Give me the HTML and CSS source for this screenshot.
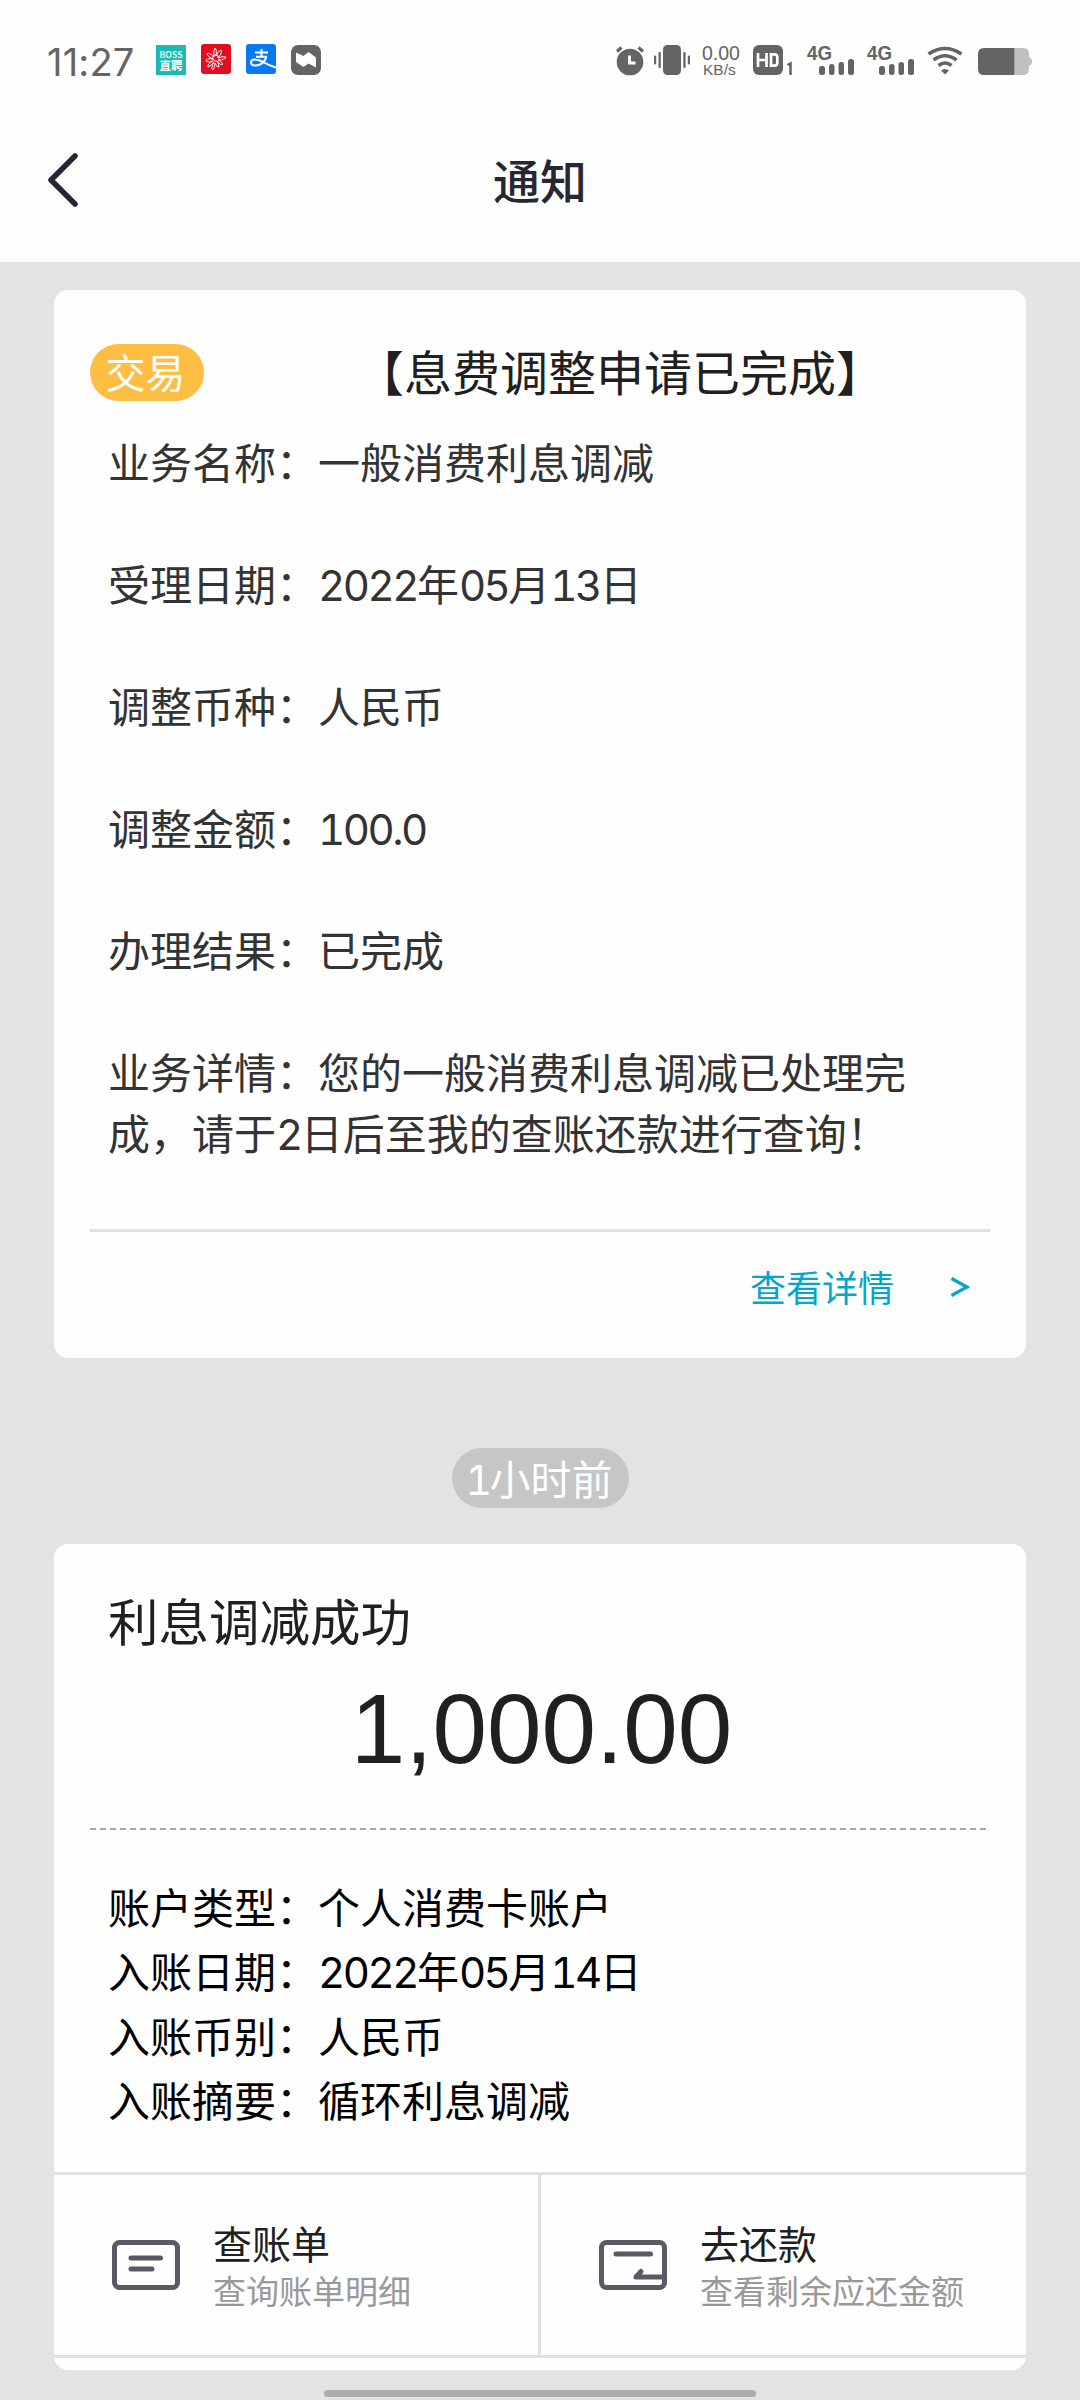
FILE: index.html
```html
<!DOCTYPE html>
<html lang="zh-CN">
<head>
<meta charset="utf-8">
<title>通知</title>
<link rel="stylesheet" href="styles.css">
</head>
<body>
<div class="statusbar">
  <div class="status-left">
    <span class="time">11:27</span>
    <svg class="app boss" width="30" height="30" viewBox="0 0 30 30"><rect width="30" height="30" fill="#1cbab4"/><text x="15" y="12.500" font-size="9.500" font-weight="500" textLength="23" lengthAdjust="spacingAndGlyphs" text-anchor="middle">BOSS</text><text x="15" y="25.200" font-size="11.500" font-weight="700" textLength="23" text-anchor="middle">直聘</text></svg>
    <svg class="app huawei" width="30" height="30" viewBox="0 0 30 30"><rect width="30" height="30" rx="3" fill="#e30d22"/><g fill="none" stroke="#fff" stroke-width="1" stroke-linejoin="round"><path d="M13 13Q8 8 6 10Q7 13 12 15Q5 14 5 17Q8 19 12 17Q6 20 7 23Q10 22 13 18Q9 24 12 26Q14 23 14 19Q16 24 18 23Q18 20 16 17Q20 22 22 20Q20 17 17 16Q24 16 25 13Q21 12 17 14Q22 8 20 6Q16 8 15 12Q16 5 14 4Q12 7 13 13Z"/><path d="M17 14Q18 11 15 11Q11 11 12 15Q13 18 16 17"/></g></svg>
    <svg class="app alipay" width="30" height="30" viewBox="0 0 30 30"><rect width="30" height="30" rx="3" fill="#0a78f0"/><g fill="none" stroke="#fff" stroke-width="2"><path d="M9 8.500H22M15.500 5V13M10 12.800H21"/><path d="M20.500 13Q17 21.500 9.500 21.500Q5 21.500 5 18.500Q5 15.500 9 15.500Q13 15.500 18 18.500Q23 21.500 30 23.500"/></g></svg>
    <svg class="app" width="30" height="30" viewBox="0 0 30 30"><rect width="30" height="30" rx="7" fill="#646464"/><path d="M5 7.500L12.500 11L17.500 7L25 12.500V22.500L17.500 18.500L12.500 22L5 17Z" fill="#fff"/></svg>
  </div>
  <div class="status-right">
    <svg class="alarm" width="30" height="30" viewBox="0 0 30 30"><circle cx="15" cy="17" r="13.300" fill="#646464"/><path d="M2 6.500L6.500 2.500M28 6.500L23.500 2.500" stroke="#646464" stroke-width="3.200"/><path d="M14.500 10.500V18H20.500" fill="none" stroke="#fff" stroke-width="2.800"/></svg>
    <svg class="vibrate" width="36" height="30" viewBox="0 0 36 30" fill="#646464"><rect x="9" width="18" height="30" rx="4.500"/><rect x="4.500" y="7" width="2.300" height="16" rx="1"/><rect y="10.500" width="2.200" height="9" rx="1"/><rect x="29.300" y="7" width="2.300" height="16" rx="1"/><rect x="33.800" y="10.500" width="2.200" height="9" rx="1"/></svg>
    <div class="speed"><span>0.00</span><small>KB/s</small></div>
    <svg class="hd" width="40" height="30" viewBox="0 0 40 30"><rect width="30" height="30" rx="6" fill="#646464"/><path d="M5 8V22M13.500 8V22M5 15H13.500M18 9.300H21.500Q24.300 9.300 24.300 12V18Q24.300 20.700 21.500 20.700H18Z" fill="none" stroke="#fff" stroke-width="2.700"/><path d="M34.500 20L37.500 18.500V30" fill="none" stroke="#646464" stroke-width="2.500"/></svg>
    <svg class="signal" width="48" height="30" viewBox="0 0 48 30" fill="#646464"><text x="0" y="14.700" font-size="20" font-weight="700" textLength="25" lengthAdjust="spacingAndGlyphs">4G</text><rect x="12" y="21" width="6" height="9" rx="2.500"/><rect x="22" y="19" width="5.500" height="11" rx="2.500"/><rect x="31.500" y="17" width="5.500" height="13" rx="2.500"/><rect x="41" y="14" width="6" height="16" rx="2.500"/></svg>
    <svg class="signal" width="48" height="30" viewBox="0 0 48 30" fill="#646464"><text x="0" y="14.700" font-size="20" font-weight="700" textLength="25" lengthAdjust="spacingAndGlyphs">4G</text><rect x="12" y="21" width="6" height="9" rx="2.500"/><rect x="22" y="19" width="5.500" height="11" rx="2.500"/><rect x="31.500" y="17" width="5.500" height="13" rx="2.500"/><rect x="41" y="14" width="6" height="16" rx="2.500"/></svg>
    <svg class="wifi" width="36" height="30" viewBox="0 0 36 30" fill="none" stroke="#646464" stroke-width="3.600"><path d="M1.500 9Q18 -2 34.500 9M6.500 15Q18 6.500 29.500 15M11.500 20.500Q18 15.500 24.500 20.500"/><path d="M14 25.500Q18 22.500 22 25.500L18 29.500Z" fill="#646464" stroke="none"/></svg>
    <svg class="battery" width="54" height="27" viewBox="0 0 54 27"><path d="M36.500 0H45Q51 0 51 6V9Q54 10 54 13.500T51 18V21Q51 27 45 27H36.500Z" fill="#c0c0c0"/><path d="M36.500 0H6Q0 0 0 6V21Q0 27 6 27H36.500Z" fill="#646464"/></svg>
  </div>
</div>
<header class="navbar">
  <svg class="back" width="32" height="56" viewBox="0 0 32 56"><path d="M28 4L4 28L28 52" fill="none" stroke="#272734" stroke-width="5.500" stroke-linecap="round" stroke-linejoin="round"/></svg>
  <h1>通知</h1>
</header>
<main class="feed">
  <article class="card notice">
    <div class="notice-head"><span class="badge">交易</span><h2>【息费调整申请已完成】</h2></div>
    <div class="notice-body">
      <p>业务名称：一般消费利息调减</p>
      <p>受理日期：<span class="num">2022</span>年<span class="num">05</span>月<span class="num">13</span>日</p>
      <p>调整币种：人民币</p>
      <p>调整金额：<span class="num">100.0</span></p>
      <p>办理结果：已完成</p>
      <p>业务详情：您的一般消费利息调减已处理完<br>成，请于<span class="num">2</span>日后至我的查账还款进行查询！</p>
    </div>
    <a class="more"><span>查看详情</span><svg width="20" height="20" viewBox="0 0 20 20"><path d="M1.500 1.500L17 10L1.500 18.500" fill="none" stroke="#05a6ca" stroke-width="3.200"/></svg></a>
  </article>
  <div class="ago"><span class="num">1</span>小时前</div>
  <article class="card result">
    <h2>利息调减成功</h2>
    <div class="amount">1,000.00</div>
    <svg class="dashes" width="900" height="2"><path d="M0 1H900" stroke="#8a8a8a" stroke-width="1.300" stroke-dasharray="6 4"/></svg>
    <div class="result-body">
      <p>账户类型：个人消费卡账户</p>
      <p>入账日期：<span class="num">2022</span>年<span class="num">05</span>月<span class="num">14</span>日</p>
      <p>入账币别：人民币</p>
      <p>入账摘要：循环利息调减</p>
    </div>
    <div class="actions">
      <a class="action">
        <svg width="68" height="50" viewBox="0 0 68 50" fill="none" stroke="#5b5965" stroke-width="5" stroke-linecap="round"><rect x="2.500" y="2.500" width="63" height="45" rx="5"/><path d="M19 18H48.500M19 29H40"/></svg>
        <div><b>查账单</b><small>查询账单明细</small></div>
      </a>
      <a class="action">
        <svg width="68" height="50" viewBox="0 0 68 50" fill="none" stroke="#5b5965" stroke-width="5" stroke-linecap="round" stroke-linejoin="round"><rect x="2.500" y="2.500" width="63" height="45" rx="5"/><path d="M17 14H51.500M64 37H37L42 31.500"/></svg>
        <div><b>去还款</b><small>查看剩余应还金额</small></div>
      </a>
    </div>
  </article>
  <div class="homebar"></div>
</main>
</body>
</html>
```
FILE: styles.css
```css
* { box-sizing: border-box; }
body {
  margin: 0;
  width: 1080px;
  height: 2400px;
  overflow: hidden;
  background: #e3e3e3;
  font-family: "Noto Sans CJK SC", sans-serif;
  color: #202020;
}
h1, h2, p { margin: 0; font-weight: 400; }
svg { display: block; flex: none; overflow: visible; }

.statusbar {
  display: flex;
  justify-content: space-between;
  height: 100px;
  padding: 45px 48px 0 47px;
  background: #fefefe;
  color: #646464;
}
.status-left, .status-right { display: flex; align-items: flex-start; height: 30px; }
.time {
  width: 109px;
  font: 400 38px/34px Inter, sans-serif;
  letter-spacing: 0.2px;
}
.app { margin-right: 15px; }
.app text { fill: #fff; font-family: "Noto Sans CJK SC", sans-serif; }
.huawei, .alipay { margin-top: -1px; }
.alarm { margin-right: 9px; }
.vibrate { margin-right: 12px; }
.speed {
  width: 39px;
  margin-right: 12px;
  font-family: "Liberation Sans", sans-serif;
}
.speed span { display: block; font-size: 19.5px; line-height: 16px; }
.speed small { display: block; padding-left: 1px; font-size: 15.5px; line-height: 17px; white-space: nowrap; }
.hd { margin-right: 14px; }
.signal { margin-right: 12px; font-family: "Liberation Sans", sans-serif; }
.wifi { margin-right: 15px; }
.battery { margin-top: 3px; }

.navbar {
  display: grid;
  grid-template-columns: 120px 1fr 120px;
  align-items: center;
  height: 162px;
  padding-bottom: 2px;
  background: #fefefe;
}
.back { margin-left: 47px; }
.navbar h1 { padding-bottom: 3px; font-size: 47px; font-weight: 500; line-height: 67px; text-align: center; color: #272734; }

.feed { display: flex; flex-direction: column; align-items: center; padding-top: 28px; }
.card { width: 972px; border-radius: 14px; background: #fefefe; overflow: hidden; }
.num {
  font-family: Inter, sans-serif;
  font-feature-settings: "tnum";
  letter-spacing: -0.06em;
  line-height: 1;
}

.notice { height: 1068px; padding: 47px 36px 0; }
.notice-head { display: flex; align-items: center; height: 70px; }
.badge {
  width: 114px;
  height: 57px;
  padding-right: 3px;
  border-radius: 29px;
  background: #ffbe43;
  color: #fff;
  font-size: 40px;
  line-height: 54px;
  text-align: center;
}
.notice-head h2 { margin-left: 152px; padding-bottom: 4px; font-size: 48px; line-height: 66px; white-space: nowrap; }
.notice-body { height: 825px; padding: 23px 18px 0; border-bottom: 3px solid #e0e0e0; }
.notice-body p { margin-bottom: 61px; font-size: 42px; line-height: 61px; color: #333; white-space: nowrap; }
.more {
  display: flex;
  align-items: center;
  justify-content: flex-end;
  gap: 56px;
  height: 110px;
  padding-right: 20px;
  font-size: 36px;
  line-height: 50px;
  color: #05a6ca;
}
.more span { padding-bottom: 2px; }

.ago {
  width: 177px;
  height: 60px;
  margin: 90px 0 36px;
  padding-right: 2px;
  border-radius: 30px;
  background: #c6c6c6;
  color: #fff;
  font-size: 41px;
  line-height: 58px;
  text-align: center;
  white-space: nowrap;
}

.result { height: 826px; }
.result h2 { padding: 38px 54px 3px; font-size: 50.5px; line-height: 74px; }
.amount {
  height: 169px;
  padding-left: 3px;
  font: 98px/140px "Liberation Sans", sans-serif;
  text-align: center;
}
.dashes { margin-left: 36px; }
.result-body { height: 345px; padding: 44px 54px 0; border-bottom: 3px solid #e0e0e0; }
.result-body p { height: 64.3px; font-size: 42px; line-height: 64px; color: #000; }
.actions { display: grid; grid-template-columns: 487px 1fr; height: 183px; border-bottom: 3px solid #e0e0e0; }
.action { display: flex; align-items: center; gap: 33px; padding-left: 58px; }
.action:first-child { border-right: 3px solid #e0e0e0; }
.action b { display: block; font-size: 39px; font-weight: 400; line-height: 50px; }
.action small { display: block; font-size: 33px; line-height: 46px; color: #999; }
.homebar { width: 432px; height: 7px; margin-top: 20px; border-radius: 4px; background: #adadad; }
```
